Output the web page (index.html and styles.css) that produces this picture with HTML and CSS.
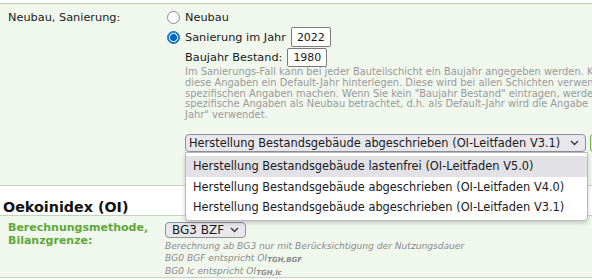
FILE: index.html
```html
<!DOCTYPE html>
<html lang="de">
<head>
<meta charset="utf-8">
<link rel="stylesheet" href="styles.css">
</head>
<body>
<div class="page">
  <div class="topgap"></div>
  <div class="row green row1">
    <div class="label">Neubau, Sanierung:</div>
    <div class="value">
      <div class="line l-neubau"><span class="radio"></span><span>Neubau</span></div>
      <div class="line l-san"><span class="radio checked"></span><span>Sanierung im Jahr</span><span class="inp inp1">2022</span></div>
      <div class="line l-bau"><span>Baujahr Bestand:</span><span class="inp inp2">1980</span></div>
      <div class="help">
        <div>Im Sanierungs-Fall kann bei jeder Bauteilschicht ein Baujahr angegeben werden. Können Sie für</div>
        <div>diese Angaben ein Default-Jahr hinterlegen. Diese wird bei allen Schichten verwendet, die keine</div>
        <div>spezifischen Angaben machen. Wenn Sie kein "Baujahr Bestand" eintragen, werden alle Schichten ohne</div>
        <div>spezifische Angaben als Neubau betrachtet, d.h. als Default-Jahr wird die Angabe "Sanierung im</div>
        <div>Jahr" verwendet.</div>
      </div>
      <div class="selrow">
        <div class="select big"><span>Herstellung Bestandsgebäude abgeschrieben (OI-Leitfaden V3.1)</span>
          <svg class="chev" width="9" height="6" viewBox="0 0 9 6"><path d="M1 1 L4.5 4.5 L8 1" fill="none" stroke="#333" stroke-width="1.3"/></svg>
        </div>
        <div class="gbtn"></div>
        <div class="dropdown">
          <div class="opt hl">Herstellung Bestandsgebäude lastenfrei (OI-Leitfaden V5.0)</div>
          <div class="opt">Herstellung Bestandsgebäude abgeschrieben (OI-Leitfaden V4.0)</div>
          <div class="opt">Herstellung Bestandsgebäude abgeschrieben (OI-Leitfaden V3.1)</div>
        </div>
      </div>
    </div>
  </div>
  <div class="heading">Oekoinidex (OI)</div>
  <div class="row green row2">
    <div class="label glabel">Berechnungsmethode,<br>Bilanzgrenze:</div>
    <div class="value">
      <div class="select small"><span>BG3 BZF</span>
        <svg class="chev" width="9" height="6" viewBox="0 0 9 6"><path d="M1 1 L4.5 4.5 L8 1" fill="none" stroke="#333" stroke-width="1.3"/></svg>
      </div>
      <div class="ihelp">
        <div>Berechnung ab BG3 nur mit Berücksichtigung der Nutzungsdauer</div>
        <div>BG0 BGF entspricht OI<sub>TGH,BGF</sub></div>
        <div>BG0 lc entspricht OI<sub>TGH,lc</sub></div>
      </div>
    </div>
  </div>
</div>
</body>
</html>
```

FILE: styles.css
```css
html, body {
  margin: 0;
  padding: 0;
  background: #ffffff;
  overflow: hidden;
}
body {
  font-family: "DejaVu Sans", Verdana, sans-serif;
  font-size: 11.3px;
  color: #1a1a1a;
}
.page {
  width: 640px;
}
.topgap {
  height: 3px;
}
.row {
  display: flex;
  border-top: 1px solid #c3d3bb;
}
.green {
  background: #f0f7ed;
}
.label {
  width: 157px;
  padding-left: 8px;
  flex: none;
}
.row1 {
  height: 181px;
}
.row1 .label {
  padding-top: 7px;
  line-height: 13px;
}
.value {
  position: relative;
  flex: 1;
}
.line {
  display: flex;
  align-items: center;
  white-space: nowrap;
}
.l-neubau {
  height: 18px;
  margin-top: 4px;
}
.l-san {
  height: 20px;
  margin-top: 1px;
}
.l-bau {
  height: 18px;
  margin-top: 1px;
  padding-left: 20px;
}
.radio {
  width: 11px;
  height: 11px;
  border: 1px solid #8a8a8a;
  border-radius: 50%;
  background: #fff;
  margin: 0 5px 0 2px;
  flex: none;
  box-sizing: content-box;
}
.radio.checked {
  border: 1px solid #0067c0;
  background: radial-gradient(circle, #0067c0 0 3.3px, #fff 3.8px);
  box-shadow: inset 0 0 0 1px #0067c0;
}
.inp {
  display: inline-flex;
  align-items: center;
  justify-content: center;
  border: 1px solid #7a7a7a;
  border-radius: 2px;
  background: #fff;
  height: 17px;
  width: 38px;
  font-size: 11px;
  box-sizing: content-box;
  padding-top: 1px;
}
.inp1 {
  margin-left: 5px;
}
.inp2 {
  margin-left: 5px;
  height: 16px;
}
.help {
  padding-left: 20px;
  margin-top: 1px;
  font-size: 9.9px;
  line-height: 10.75px;
  color: #9a9a9a;
  white-space: nowrap;
}
.selrow {
  position: relative;
  display: flex;
  margin-top: 13px;
  padding-left: 20px;
}
.select {
  display: flex;
  align-items: center;
  justify-content: space-between;
  background: #e8e8ec;
  border: 1px solid #8f8f9d;
  border-radius: 4px;
  box-sizing: border-box;
  white-space: nowrap;
  color: #1a1a1a;
}
.select.big {
  width: 401px;
  height: 18px;
  padding: 0 6px 0 3px;
  font-size: 11.4px;
}
.select.small {
  width: 81px;
  height: 16px;
  margin-top: 6px;
  padding: 0 6px 0 6px;
  font-size: 12px;
}
.gbtn {
  margin-left: 4px;
  width: 30px;
  height: 18px;
  border: 1px solid #6fb04a;
  background: #e6f2df;
  border-radius: 3px 0 0 3px;
  box-sizing: border-box;
}
.dropdown {
  position: absolute;
  left: 20px;
  top: 18px;
  width: 403px;
  height: 69px;
  box-sizing: border-box;
  padding-top: 3px;
  background: #ffffff;
  border: 1px solid #b9b9b9;
  border-radius: 0 0 4px 4px;
  box-shadow: 0 2px 4px rgba(0,0,0,0.18);
  z-index: 2;
}
.opt {
  height: 20px;
  line-height: 20px;
  padding-left: 7px;
  white-space: nowrap;
  font-size: 11.4px;
  color: #1a1a1a;
}
.opt.hl {
  background: #e1e1e6;
  height: 21px;
}
.heading {
  border-top: 1px solid #c3d3bb;
  height: 30px;
  box-sizing: border-box;
  padding-left: 3px;
  padding-top: 12px;
  font-size: 14.3px;
  font-weight: bold;
  line-height: 18px;
  color: #111;
}
.row2 {
  height: 61px;
  border-bottom: 1px solid #c3d3bb;
}
.glabel {
  color: #5ea83a;
  font-weight: bold;
  font-size: 11px;
  line-height: 13px;
  padding-top: 5px;
}
.ihelp {
  margin-top: 3px;
  font-size: 9.1px;
  font-style: italic;
  line-height: 11.5px;
  color: #8a8a8a;
  white-space: nowrap;
}
.ihelp sub {
  font-size: 7px;
  font-weight: bold;
  vertical-align: -1px;
}
```
